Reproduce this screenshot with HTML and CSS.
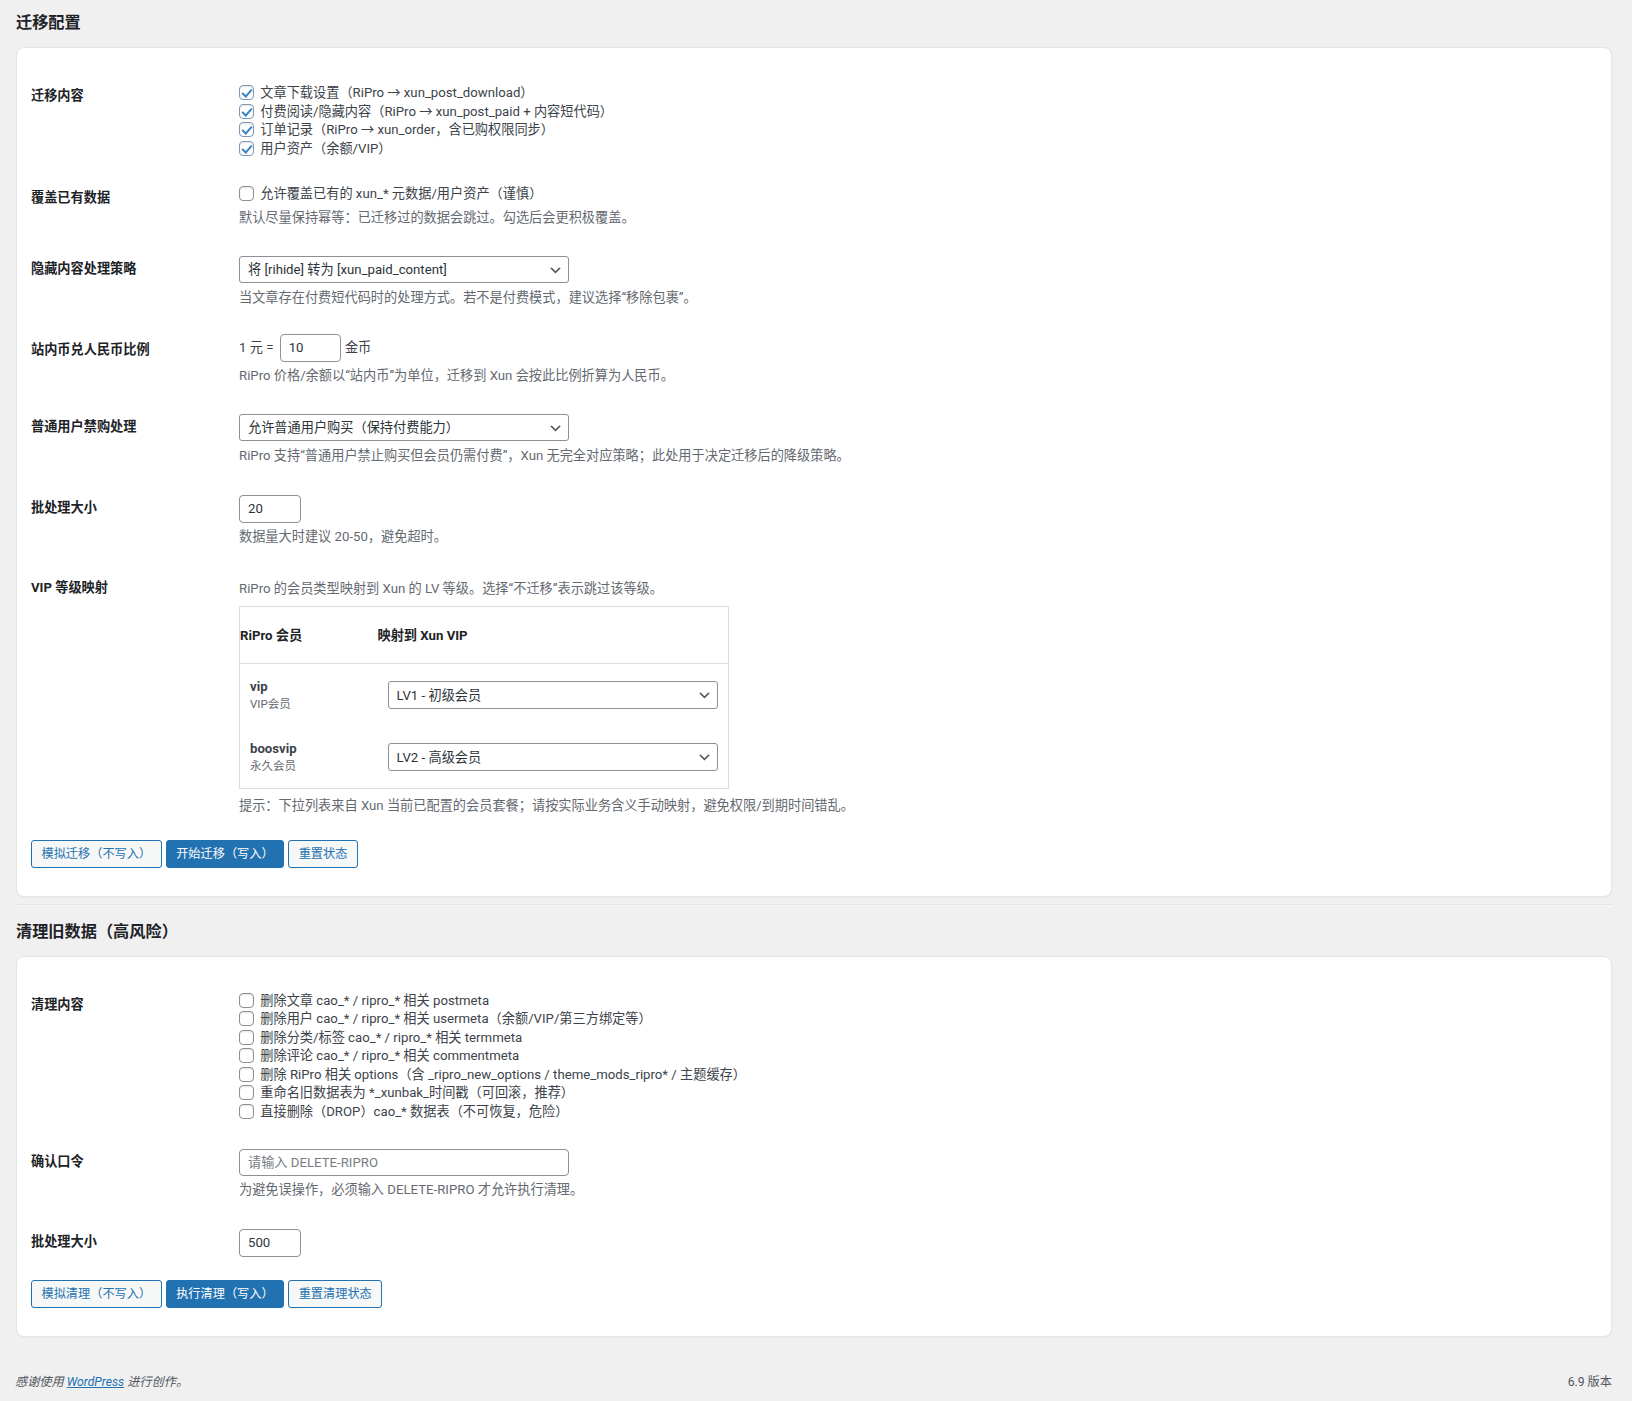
FILE: index.html
```html
<!DOCTYPE html>
<html lang="zh-CN">
<head>
<meta charset="utf-8">
<title>迁移配置</title>
<link rel="stylesheet" href="styles.css">
</head>
<body>
<div class="wrap">
  <h2 class="section-title">迁移配置</h2>
  <div class="card">
    <div class="form-rows">
      <div class="row">
        <div class="row-label">迁移内容</div>
        <div class="row-field row-field-checks">
          <div class="check-list">
            <label class="check"><input type="checkbox" class="cb" checked> 文章下载设置（RiPro → xun_post_download）</label>
            <label class="check"><input type="checkbox" class="cb" checked> 付费阅读/隐藏内容（RiPro → xun_post_paid + 内容短代码）</label>
            <label class="check"><input type="checkbox" class="cb" checked> 订单记录（RiPro → xun_order，含已购权限同步）</label>
            <label class="check"><input type="checkbox" class="cb" checked> 用户资产（余额/VIP）</label>
          </div>
        </div>
      </div>

      <div class="row">
        <div class="row-label">覆盖已有数据</div>
        <div class="row-field">
          <label class="check"><input type="checkbox" class="cb"> 允许覆盖已有的 xun_* 元数据/用户资产（谨慎）</label>
          <p class="desc">默认尽量保持幂等：已迁移过的数据会跳过。勾选后会更积极覆盖。</p>
        </div>
      </div>

      <div class="row">
        <div class="row-label">隐藏内容处理策略</div>
        <div class="row-field">
          <div class="select-wrap">
            <select class="select"><option selected>将 [rihide] 转为 [xun_paid_content]</option><option>移除包裹</option></select>
            <svg class="chev" viewBox="0 0 20 20" aria-hidden="true"><path d="M5 6l5 5 5-5 2 1-7 7-7-7z"/></svg>
          </div>
          <p class="desc desc-after-select">当文章存在付费短代码时的处理方式。若不是付费模式，建议选择“移除包裹”。</p>
        </div>
      </div>

      <div class="row">
        <div class="row-label">站内币兑人民币比例</div>
        <div class="row-field row-field-tight">
          <div class="inline-line">1 元 = <input type="text" class="input input-ratio" value="10"> 金币</div>
          <p class="desc">RiPro 价格/余额以“站内币”为单位，迁移到 Xun 会按此比例折算为人民币。</p>
        </div>
      </div>

      <div class="row">
        <div class="row-label">普通用户禁购处理</div>
        <div class="row-field">
          <div class="select-wrap">
            <select class="select"><option selected>允许普通用户购买（保持付费能力）</option></select>
            <svg class="chev" viewBox="0 0 20 20" aria-hidden="true"><path d="M5 6l5 5 5-5 2 1-7 7-7-7z"/></svg>
          </div>
          <p class="desc desc-after-select">RiPro 支持“普通用户禁止购买但会员仍需付费”，Xun 无完全对应策略；此处用于决定迁移后的降级策略。</p>
        </div>
      </div>

      <div class="row">
        <div class="row-label">批处理大小</div>
        <div class="row-field">
          <input type="text" class="input input-small" value="20">
          <p class="desc">数据量大时建议 20-50，避免超时。</p>
        </div>
      </div>

      <div class="row">
        <div class="row-label">VIP 等级映射</div>
        <div class="row-field">
          <p class="desc">RiPro 的会员类型映射到 Xun 的 LV 等级。选择“不迁移”表示跳过该等级。</p>
          <table class="map-table">
            <colgroup><col class="col-a"><col class="col-b"></colgroup>
            <thead>
              <tr><th>RiPro 会员</th><th>映射到 Xun VIP</th></tr>
            </thead>
            <tbody>
              <tr>
                <td><strong class="lvl-key">vip</strong><span class="lvl-name">VIP会员</span></td>
                <td>
                  <div class="select-wrap select-full">
                    <select class="select select-map"><option selected>LV1 - 初级会员</option></select>
                    <svg class="chev" viewBox="0 0 20 20" aria-hidden="true"><path d="M5 6l5 5 5-5 2 1-7 7-7-7z"/></svg>
                  </div>
                </td>
              </tr>
              <tr>
                <td><strong class="lvl-key">boosvip</strong><span class="lvl-name">永久会员</span></td>
                <td>
                  <div class="select-wrap select-full">
                    <select class="select select-map"><option selected>LV2 - 高级会员</option></select>
                    <svg class="chev" viewBox="0 0 20 20" aria-hidden="true"><path d="M5 6l5 5 5-5 2 1-7 7-7-7z"/></svg>
                  </div>
                </td>
              </tr>
            </tbody>
          </table>
          <p class="desc desc-hint">提示：下拉列表来自 Xun 当前已配置的会员套餐；请按实际业务含义手动映射，避免权限/到期时间错乱。</p>
        </div>
      </div>
    </div>
    <div class="actions">
      <button type="button" class="button">模拟迁移（不写入）</button>
      <button type="button" class="button button-primary">开始迁移（写入）</button>
      <button type="button" class="button">重置状态</button>
    </div>
  </div>

  <hr class="sep">

  <h2 class="section-title">清理旧数据（高风险）</h2>
  <div class="card">
    <div class="form-rows">
      <div class="row">
        <div class="row-label">清理内容</div>
        <div class="row-field">
          <div class="check-list">
            <label class="check"><input type="checkbox" class="cb"> 删除文章 cao_* / ripro_* 相关 postmeta</label>
            <label class="check"><input type="checkbox" class="cb"> 删除用户 cao_* / ripro_* 相关 usermeta（余额/VIP/第三方绑定等）</label>
            <label class="check"><input type="checkbox" class="cb"> 删除分类/标签 cao_* / ripro_* 相关 termmeta</label>
            <label class="check"><input type="checkbox" class="cb"> 删除评论 cao_* / ripro_* 相关 commentmeta</label>
            <label class="check"><input type="checkbox" class="cb"> 删除 RiPro 相关 options（含 _ripro_new_options / theme_mods_ripro* / 主题缓存）</label>
            <label class="check"><input type="checkbox" class="cb"> 重命名旧数据表为 *_xunbak_时间戳（可回滚，推荐）</label>
            <label class="check"><input type="checkbox" class="cb"> 直接删除（DROP）cao_* 数据表（不可恢复，危险）</label>
          </div>
        </div>
      </div>

      <div class="row">
        <div class="row-label">确认口令</div>
        <div class="row-field">
          <input type="text" class="input input-wide" placeholder="请输入 DELETE-RIPRO">
          <p class="desc">为避免误操作，必须输入 DELETE-RIPRO 才允许执行清理。</p>
        </div>
      </div>

      <div class="row">
        <div class="row-label">批处理大小</div>
        <div class="row-field">
          <input type="text" class="input input-small" value="500">
        </div>
      </div>
    </div>
    <div class="actions">
      <button type="button" class="button">模拟清理（不写入）</button>
      <button type="button" class="button button-primary">执行清理（写入）</button>
      <button type="button" class="button">重置清理状态</button>
    </div>
  </div>
</div>

<footer class="footer">
  <p class="footer-thanks">感谢使用 <a href="#" class="footer-link">WordPress</a> 进行创作。</p>
  <p class="footer-version">6.9 版本</p>
</footer>
</body>
</html>
```

FILE: styles.css
```css
html, body {
  margin: 0;
  padding: 0;
}

body {
  background: #f0f0f1;
  color: #3c434a;
  font-family: Roboto, "Noto Sans CJK SC", sans-serif;
  font-size: 13.2px;
  line-height: 18.5px;
}

.wrap {
  padding: 12px 20px 0 16px;
}

.section-title {
  margin: 0 0 14px;
  font-size: 16.2px;
  line-height: 21px;
  font-weight: 700;
  color: #1d2327;
}

.card {
  background: #fff;
  border: 1px solid #e3e4e6;
  border-radius: 8px;
  box-shadow: 0 1px 2px rgba(0, 0, 0, 0.03);
  padding: 21px 15px 28px 14px;
}

.form-rows {
  display: flex;
  flex-direction: column;
}

.row {
  display: grid;
  grid-template-columns: 208px 1fr;
}

.row-label {
  padding-top: 18px;
  font-weight: 700;
  color: #1d2327;
}

.row-field {
  padding: 14px 0;
  min-width: 0;
}

.row-field-checks {
  padding: 15px 0 13px;
}

.row-field-tight {
  padding-top: 11px;
}

.check-list {
  display: flex;
  flex-direction: column;
}

.check {
  display: block;
  color: #3c434a;
}

.cb {
  -webkit-appearance: none;
  appearance: none;
  position: relative;
  box-sizing: border-box;
  width: 15px;
  height: 15px;
  margin: 0 3px 0 0;
  border: 1px solid #8c8f94;
  border-radius: 4px;
  background: #fff;
  vertical-align: -3px;
  box-shadow: inset 0 1px 2px rgba(0, 0, 0, 0.1);
}

.cb:checked {
  border-color: #7f97b3;
}

.cb:checked::before {
  content: "";
  position: absolute;
  left: 4px;
  top: 1px;
  width: 4px;
  height: 8px;
  border-right: 2px solid #3582c4;
  border-bottom: 2px solid #3582c4;
  transform: rotate(42deg);
}

.desc {
  margin: 5px 0 1px;
  color: #646970;
}

.desc-after-select {
  margin-top: 6px;
}

.desc-hint {
  margin-top: 8px;
}

.select-wrap {
  position: relative;
  display: inline-block;
  vertical-align: top;
}

.select {
  -webkit-appearance: none;
  appearance: none;
  box-sizing: border-box;
  width: 330px;
  height: 27px;
  margin: 0;
  padding: 0 24px 0 8px;
  border: 1px solid #8c8f94;
  border-radius: 3px;
  background: #fff;
  color: #2c3338;
  font-family: inherit;
  font-size: 13.2px;
  line-height: 25px;
}

.chev {
  position: absolute;
  right: 6px;
  top: 50%;
  width: 15px;
  height: 15px;
  margin-top: -7px;
  fill: #50575e;
  pointer-events: none;
}

.select-full {
  display: block;
}

.select-map {
  width: 100%;
  height: 28px;
}

.inline-line {
  line-height: 28px;
  height: 28px;
}

.input {
  box-sizing: border-box;
  height: 28px;
  margin: 0 1px;
  padding: 0 8px;
  border: 1px solid #8c8f94;
  border-radius: 4px;
  background: #fff;
  color: #2c3338;
  font-family: inherit;
  font-size: 13.2px;
  vertical-align: top;
}

.input::placeholder {
  color: #787c82;
}

.input-ratio {
  width: 61px;
  margin-left: 3px;
}

.input-small {
  width: 62px;
  margin: 0;
  display: block;
}

.input-wide {
  width: 330px;
  height: 27px;
  margin: 0;
  display: block;
}

.map-table {
  margin-top: 7px;
  width: 490px;
  table-layout: fixed;
  border-collapse: collapse;
  border: 1px solid #dcdcde;
  background: #fff;
}

.col-a {
  width: 138px;
}

.map-table th {
  text-align: left;
  padding: 20px 10px 19px 0;
  line-height: 17.5px;
  font-weight: 700;
  color: #1d2327;
  border-bottom: 1px solid #dcdcde;
}

.map-table td {
  padding: 14px 10px;
  vertical-align: middle;
}

.lvl-key {
  display: block;
  font-weight: 700;
  color: #3c434a;
  line-height: 18px;
}

.lvl-name {
  display: block;
  font-size: 11.5px;
  line-height: 16px;
  color: #646970;
}

.actions {
  display: flex;
  gap: 4px;
  margin-top: 9px;
}

.button {
  box-sizing: border-box;
  height: 28px;
  padding: 0 9.5px;
  border: 1px solid #2271b1;
  border-radius: 3px;
  background: #f6f7f7;
  color: #2271b1;
  font-family: inherit;
  font-size: 12.2px;
  line-height: 26px;
  cursor: pointer;
}

.button-primary {
  background: #2271b1;
  color: #fff;
}

.sep {
  margin: 7px 0 15px;
  height: 0;
  border: 0;
  border-top: 1px solid #e2e3e5;
  border-bottom: 1px solid #f6f7f7;
}

.footer {
  display: flex;
  justify-content: space-between;
  padding: 36px 20px 0 15px;
  font-size: 12.2px;
  line-height: 18px;
  color: #50575e;
}

.footer p {
  margin: 0;
}

.footer-thanks {
  font-style: italic;
}

.footer-link {
  color: #2271b1;
  text-decoration: underline;
}
```
